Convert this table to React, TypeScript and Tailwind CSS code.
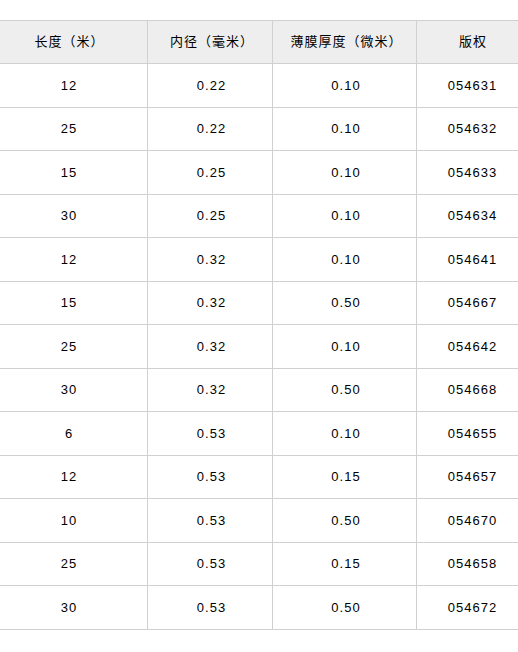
const header = ['长度（米）', '内径（毫米）', '薄膜厚度（微米）', '版权']

const rows: string[][] = [
  ['12', '0.22', '0.10', '054631'],
  ['25', '0.22', '0.10', '054632'],
  ['15', '0.25', '0.10', '054633'],
  ['30', '0.25', '0.10', '054634'],
  ['12', '0.32', '0.10', '054641'],
  ['15', '0.32', '0.50', '054667'],
  ['25', '0.32', '0.10', '054642'],
  ['30', '0.32', '0.50', '054668'],
  ['6', '0.53', '0.10', '054655'],
  ['12', '0.53', '0.15', '054657'],
  ['10', '0.53', '0.50', '054670'],
  ['25', '0.53', '0.15', '054658'],
  ['30', '0.53', '0.50', '054672'],
]

const cols = 'grid grid-cols-[160px_125px_144px_108px]'

export default function App() {
  return (
    <div className="w-[518px] h-[652px] overflow-hidden bg-white pt-[20px] font-['Liberation_Sans','Noto_Sans_CJK_SC',sans-serif] text-[13px] tracking-[1px] text-black">
      <div className="-ml-[12px] w-[537px]">
        {/* header */}
        <div className={`${cols} h-[44px] bg-[#eeeeee] border-y border-[#d0d0d0]`}>
          {header.map((h, i) => (
            <div
              key={h}
              className={`flex items-center justify-center pl-[4px] ${i < 3 ? 'border-r border-[#d0d0d0]' : ''}`}
            >
              {h}
            </div>
          ))}
        </div>

        {rows.map((r, ri) => (
          <div key={ri} className={`${cols} h-[43.5px] border-b border-[#d0d0d0]`}>
            {r.map((c, i) => (
              <div
                key={i}
                className={`flex items-center justify-center pl-[3px] ${i < 3 ? 'border-r border-[#d0d0d0]' : ''}`}
              >
                {c}
              </div>
            ))}
          </div>
        ))}
      </div>
    </div>
  )
}
